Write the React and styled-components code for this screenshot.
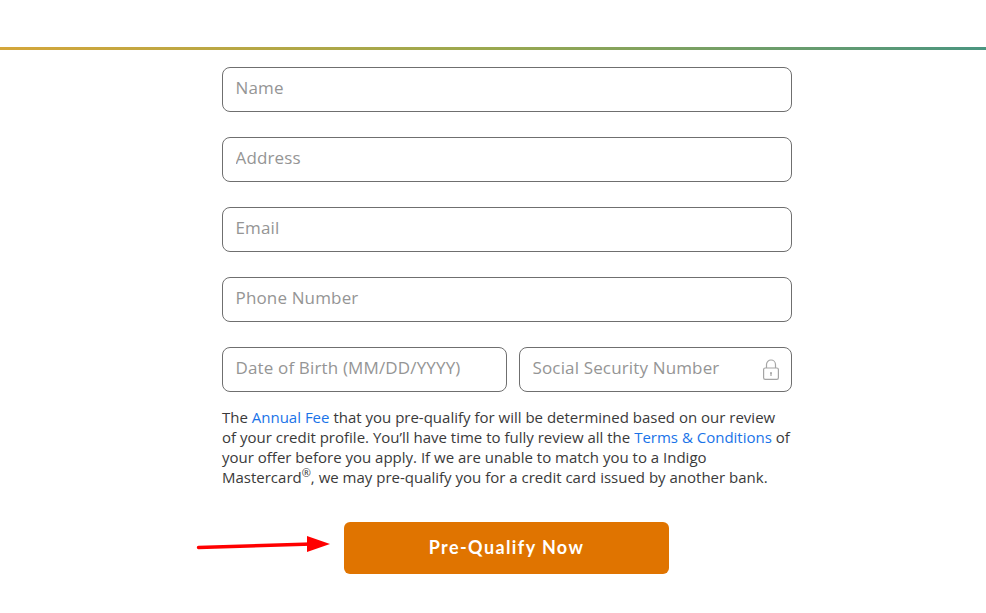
import React from "react"
import styled, { createGlobalStyle } from "styled-components"

const GlobalStyle = createGlobalStyle`
  html, body {
    margin: 0;
    background: #fff;
  }
  body {
    font-family: "Open Sans", sans-serif;
  }
`

const Page = styled.div`
  width: 986px;
  height: 613px;
  overflow: hidden;
`

const TopBar = styled.header`
  height: 47px;
  border-bottom: 3px solid;
  border-image: linear-gradient(90deg, #d4a63a 0%, #9aa84f 50%, #4a9580 100%) 1;
`

const Form = styled.form`
  position: relative;
  width: 570px;
  margin: 17px 0 0 222px;
  display: flex;
  flex-direction: column;
  gap: 25px;
`

const Row = styled.div`
  display: flex;
  gap: 12px;
`

const FieldBox = styled.div`
  position: relative;
  flex: ${p => p.$flex || 1};
  min-width: 0;
`

const Input = styled.input`
  display: block;
  width: 100%;
  height: 45px;
  box-sizing: border-box;
  padding: 0 12.5px 4px;
  border: 1px solid #6f6f6f;
  border-radius: 8px;
  background: #fff;
  font-family: "Open Sans", sans-serif;
  font-size: 17px;
  letter-spacing: 0.15px;
  outline: none;
  &::placeholder {
    color: #959595;
    opacity: 1;
  }
`

const LockIcon = styled.svg`
  position: absolute;
  right: 12px;
  top: 11px;
  width: 18px;
  height: 23px;
`

const Disclosure = styled.p`
  margin: -10px 0 0;
  font-size: 15px;
  line-height: 20px;
  color: #3a3a3a;
  white-space: nowrap;
  sup {
    font-size: 11px;
    line-height: 0;
  }
`

const Link = styled.a`
  color: #1a73e8;
  text-decoration: none;
`

const ButtonRow = styled.div`
  position: relative;
  display: flex;
  justify-content: center;
  margin-top: 10px;
`

const Submit = styled.button`
  width: 325px;
  height: 52px;
  margin-right: 1px;
  padding: 0 0 2px;
  border: 0;
  border-radius: 6px;
  background: #e07400;
  color: #fff;
  font-family: Lato, sans-serif;
  font-size: 18px;
  font-weight: 700;
  letter-spacing: 1.4px;
`

const Arrow = styled.svg`
  position: absolute;
  left: -26px;
  top: 11px;
  width: 136px;
  height: 22px;
`

const App = () => {
  return (
    <Page>
      <GlobalStyle />
      <TopBar />
      <Form onSubmit={e => e.preventDefault()}>
        <Input placeholder="Name" />
        <Input placeholder="Address" />
        <Input placeholder="Email" />
        <Input placeholder="Phone Number" />
        <Row>
          <FieldBox $flex="285">
            <Input placeholder="Date of Birth (MM/DD/YYYY)" />
          </FieldBox>
          <FieldBox $flex="273">
            <Input placeholder="Social Security Number" />
            <LockIcon viewBox="0 0 18 23" fill="none" stroke="#a5a5a5" strokeWidth="1.2">
              <path d="M4.5 10V6.5a4.5 4.5 0 0 1 9 0V10" />
              <rect x="1.6" y="10" width="14.8" height="11.4" rx="1.6" />
              <circle cx="9" cy="15" r="1" fill="#a5a5a5" stroke="none" />
              <path d="M9 15v3" />
            </LockIcon>
          </FieldBox>
        </Row>
        <Disclosure>
          The <Link href="#">Annual Fee</Link> that you pre-qualify for will be determined based on our review
          <br />
          of your credit profile. You’ll have time to fully review all the <Link href="#">Terms &amp; Conditions</Link> of
          <br />
          your offer before you apply. If we are unable to match you to a Indigo
          <br />
          Mastercard<sup>®</sup>, we may pre-qualify you for a credit card issued by another bank.
        </Disclosure>
        <ButtonRow>
          <Arrow viewBox="0 0 136 22">
            <path d="M2.5 14.5L116 11" stroke="#ff0000" strokeWidth="3.4" strokeLinecap="round" />
            <path d="M111 3L134 11L111 19Z" fill="#ff0000" />
          </Arrow>
          <Submit type="submit">Pre-Qualify Now</Submit>
        </ButtonRow>
      </Form>
    </Page>
  )
}

export default App
